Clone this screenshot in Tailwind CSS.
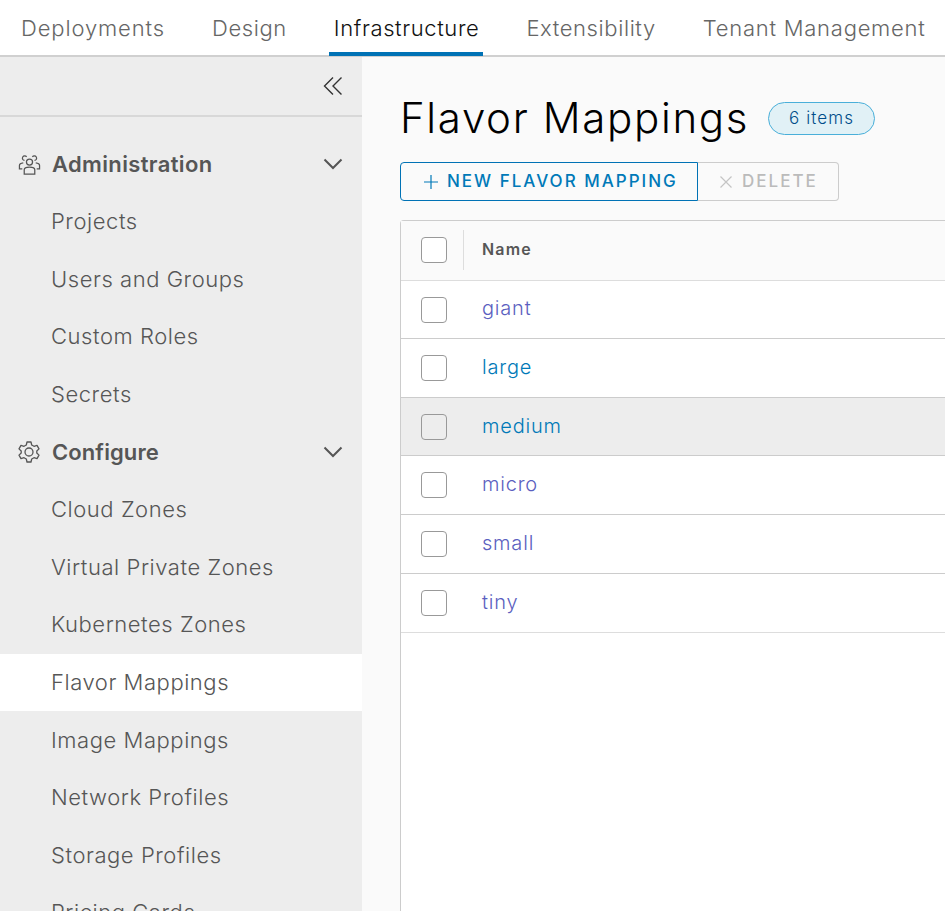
<!DOCTYPE html>
<html lang="en">
<head>
  <meta charset="UTF-8" />
  <title>Flavor Mappings</title>
  <script src="https://cdn.jsdelivr.net/npm/@tailwindcss/browser@4"></script>
</head>
<body class="h-[911px] w-[945px] overflow-hidden bg-white font-['Inter',sans-serif]">

<!-- top tabs -->
<nav class="flex h-[57px] border-b-2 border-[#d0d0d0] pl-[21px] text-[22px] font-light tracking-[0.6px] text-[#666]">
  <a class="mr-[47px] flex h-[56px] items-center tracking-[0.87px]">Deployments</a>
  <a class="mr-[42px] flex h-[56px] items-center">Design</a>
  <a class="mr-[43px] flex h-[56px] items-center border-b-4 border-[#0072b5] pl-[5px] pr-[4px] pt-[4px] text-[#111]">Infrastructure</a>
  <a class="mr-[47px] flex h-[56px] items-center">Extensibility</a>
  <a class="flex h-[56px] items-center whitespace-nowrap tracking-[0.74px]">Tenant Management</a>
</nav>

<div class="flex h-[854px]">
  <!-- sidebar -->
  <aside class="w-[362px] shrink-0 overflow-hidden bg-[#ededed] text-[22px] font-light tracking-[0.55px] text-[#565656]">
    <div class="flex h-[60px] items-center justify-end border-b-2 border-[#d8d8d8] pr-[19px]">
      <svg class="mb-[1px] h-[20px] w-[20px]" viewBox="0 0 20 20" fill="none" stroke="#333" stroke-width="1.4"><path d="M10 1.5 1.5 10 10 18.500M18.500 1.500 10 10l8.500 8.500"/></svg>
    </div>
    <div class="pt-[18.400px]">
      <div class="flex h-[57.6px] items-center pl-[18px] pr-[19px] font-semibold tracking-[0.35px]">
        <svg class="mr-[11px] h-[23px] w-[23px]" viewBox="0 0 24 24" fill="none" stroke="#555" stroke-width="1.3"><circle cx="12" cy="9.500" r="3.200"/><path d="M6.500 22v-4.500c0-1.700 2-2.800 5.500-2.800s5.500 1.100 5.500 2.800V22z"/><path d="M6.800 7.800a2.400 2.400 0 1 1 2.200-3.700M17.200 7.800A2.400 2.400 0 1 0 15 4.100M5.500 10.200C3 10.500 1.500 11.400 1.500 13v3.500h3M18.500 10.200c2.500.3 4 1.200 4 2.800v3.500h-3"/></svg>
        <span class="flex-1">Administration</span>
        <svg class="h-[20px] w-[20px]" viewBox="0 0 20 20" fill="none" stroke="#555" stroke-width="2"><path d="m1.500 5.500 8.500 8.500 8.500-8.500"/></svg>
      </div>
      <a class="flex h-[57.6px] items-center pl-[51px]">Projects</a>
      <a class="flex h-[57.6px] items-center pl-[51px]">Users and Groups</a>
      <a class="flex h-[57.6px] items-center pl-[51px]">Custom Roles</a>
      <a class="flex h-[57.6px] items-center pl-[51px]">Secrets</a>
      <div class="flex h-[57.6px] items-center pl-[17px] pr-[19px] font-semibold tracking-[0.1px]">
        <svg class="mr-[11px] h-[24px] w-[24px]" viewBox="0 0 24 24" fill="none" stroke="#555" stroke-width="1.300"><circle cx="12" cy="12" r="4"/><path d="M10 2h4l.7 3 2.300 1.300 3-.9 2 3.500-2.200 2.100v2l2.200 2.100-2 3.500-3-.9-2.300 1.300-.7 3h-4l-.7-3L7 17.700l-3 .9-2-3.500L4.200 13v-2L2 8.900l2-3.500 3 .9 2.300-1.300z" stroke-linejoin="round"/></svg>
        <span class="flex-1">Configure</span>
        <svg class="h-[20px] w-[20px]" viewBox="0 0 20 20" fill="none" stroke="#555" stroke-width="2"><path d="m1.500 5.500 8.500 8.500 8.500-8.500"/></svg>
      </div>
      <a class="flex h-[57.6px] items-center pl-[51px]">Cloud Zones</a>
      <a class="flex h-[57.6px] items-center pl-[51px]">Virtual Private Zones</a>
      <a class="flex h-[57.6px] items-center pl-[51px]">Kubernetes Zones</a>
      <a class="flex h-[57.6px] items-center bg-white pl-[51px]">Flavor Mappings</a>
      <a class="flex h-[57.6px] items-center pl-[51px]">Image Mappings</a>
      <a class="flex h-[57.6px] items-center pl-[51px]">Network Profiles</a>
      <a class="flex h-[57.6px] items-center pl-[51px]">Storage Profiles</a>
      <a class="flex h-[57.6px] items-center pl-[51px]">Pricing Cards</a>
    </div>
  </aside>

  <!-- content -->
  <main class="min-w-0 flex-1 bg-[#fafafa] pl-[38px]">
    <div class="box-content flex h-[45px] items-center pt-[39px]">
      <h1 class="mb-[3px] mr-[19px] whitespace-nowrap text-[42px] font-light tracking-[1.66px] text-black">Flavor Mappings</h1>
      <span class="flex h-[33px] w-[107px] items-center justify-center rounded-full border border-[#49afd9] bg-[#e1f1f6] text-[17px] font-light tracking-[1.1px] text-[#004d8a]">6 items</span>
    </div>
    <div class="mt-[21px] flex h-[39px] text-[17px] tracking-[2px]">
      <button class="flex w-[298px] items-center rounded-l-[4px] border border-[#0072b5] pl-[22px] font-medium text-[#0079b8]">
        <svg class="mr-[8px] h-[16px] w-[16px]" viewBox="0 0 16 16" fill="none" stroke="#0079b8" stroke-width="1.200"><path d="M8 1v14M1 8h14"/></svg>NEW FLAVOR MAPPING
      </button>
      <button class="flex w-[141px] items-center rounded-r-[4px] border border-l-0 border-[#ccc] pl-[20px] font-medium text-[#bbb]">
        <svg class="mr-[8px] h-[16px] w-[16px]" viewBox="0 0 16 16" fill="none" stroke="#c4c4c4" stroke-width="1.200"><path d="m2.500 2.500 11 11M13.500 2.500l-11 11"/></svg>DELETE
      </button>
    </div>
    <!-- table -->
    <div class="mt-[19px] h-[700px] w-[600px] rounded-tl-[4px] border-l border-t border-[#ccc] bg-white text-[20px] font-light tracking-[0.8px]">
      <div class="flex h-[60px] items-center border-b border-[#ddd] bg-[#fafafa] pb-[2px] pl-[20px]">
        <span class="h-[26px] w-[26px] rounded-[4px] border border-[#999] bg-white"></span>
        <span class="ml-[16px] h-[40px] border-l border-[#ddd]"></span>
        <span class="mb-[2px] ml-[18px] text-[16px] font-semibold tracking-[1.2px] text-[#565656]">Name</span>
      </div>
      <div class="flex h-[58px] items-center border-b border-[#ccc] pl-[20px]">
        <span class="h-[26px] w-[26px] rounded-[4px] border border-[#999] bg-white"></span>
        <a class="mb-[3px] ml-[35px] text-[#5b5fc0]">giant</a>
      </div>
      <div class="flex h-[59px] items-center border-b border-[#ccc] pl-[20px]">
        <span class="h-[26px] w-[26px] rounded-[4px] border border-[#999] bg-white"></span>
        <a class="mb-[2px] ml-[35px] text-[#0079b8]">large</a>
      </div>
      <div class="flex h-[58px] items-center border-b border-[#ccc] bg-[#ededed] pl-[20px]">
        <span class="h-[26px] w-[26px] rounded-[4px] border border-[#999]"></span>
        <a class="mb-[1px] ml-[35px] text-[#0079b8]">medium</a>
      </div>
      <div class="flex h-[59px] items-center border-b border-[#ccc] pl-[20px]">
        <span class="h-[26px] w-[26px] rounded-[4px] border border-[#999] bg-white"></span>
        <a class="mb-[2px] ml-[35px] text-[#5b5fc0]">micro</a>
      </div>
      <div class="flex h-[59px] items-center border-b border-[#ccc] pl-[20px]">
        <span class="h-[26px] w-[26px] rounded-[4px] border border-[#999] bg-white"></span>
        <a class="mb-[2px] ml-[35px] text-[#5b5fc0]">small</a>
      </div>
      <div class="flex h-[59px] items-center border-b border-[#ddd] pl-[20px]">
        <span class="h-[26px] w-[26px] rounded-[4px] border border-[#999] bg-white"></span>
        <a class="mb-[2px] ml-[35px] text-[#5b5fc0]">tiny</a>
      </div>
    </div>
  </main>
</div>

</body>
</html>
